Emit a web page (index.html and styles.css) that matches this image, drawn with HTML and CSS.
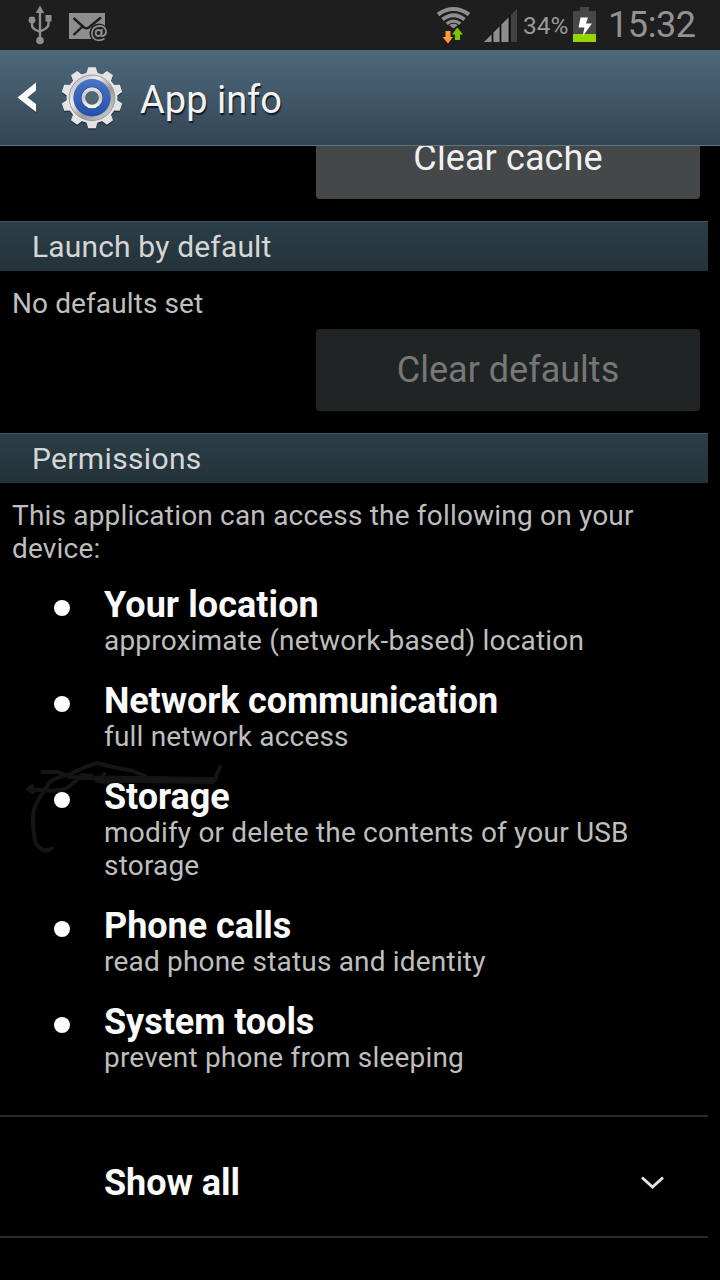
FILE: index.html
```html
<!DOCTYPE html>
<html lang="en">
<head>
<meta charset="utf-8">
<title>App info</title>
<link rel="stylesheet" href="styles.css">
</head>
<body>
<div class="screen">
  <div class="status">
    <svg class="status-left" width="130" height="50" viewBox="0 0 130 50">
      <g stroke="#8e8e8e" fill="none" stroke-width="2.4">
        <path d="M40 10V40M32 20V25Q32 28 35 29.5L40 32M48.500 19V24Q48.500 27 45 29L40 31.500"/>
      </g>
      <g fill="#8e8e8e"><path d="M40 5.500L44.300 13H35.700Z"/><circle cx="32" cy="20" r="3.400"/><path d="M45.500 15H51.500V21.500H45.500Z"/><circle cx="40" cy="40.500" r="3.800"/></g>
      <path d="M69 13H105V39H69Z" fill="#8e8e8e"/>
      <path d="M73.500 18L84 27.500Q87 29.500 90 26.500L101 17.500M73.500 35L83 26" stroke="#1e1e1e" stroke-width="2.400" fill="none"/>
      <circle cx="99" cy="33" r="9.600" fill="#1e1e1e"/>
      <circle cx="98.600" cy="33" r="3" fill="none" stroke="#8e8e8e" stroke-width="1.800"/>
      <path d="M102 29L101.300 34Q101.300 36.500 103.500 36Q106.500 34.500 106 31Q105 25.800 99.500 25.800Q92 26.500 91.800 33.500Q92.500 40.300 99 40.300Q102 40.300 104.500 38.800" fill="none" stroke="#8e8e8e" stroke-width="1.700"/>
    </svg>
    <svg class="wifi" width="34" height="44" viewBox="436 0 34 44">
      <g fill="none" stroke="#8e8e8e" stroke-width="4">
        <path d="M438 14.500Q453.500 3.500 469 14.500"/><path d="M442.500 19.500Q453.500 11 464.500 19.500"/><path d="M446.700 23.700Q453.500 18.500 460.300 23.700" stroke-width="3.200"/>
      </g>
      <path d="M449.300 25.200Q453.500 22.300 457.700 25.200L453.500 28.500Z" fill="#8e8e8e"/>
      <path d="M445.500 31H450.500V37H453L448 43.500L442.500 37H445.500Z" fill="#ff9c30"/>
      <path d="M455 40V34.500H452L457.300 27.500L463 34.500H460V40Z" fill="#7fc400"/>
    </svg>
    <svg class="signal" width="34" height="34" viewBox="484 9 34 34">
      <path d="M484 42L509.500 16.500V42Z" fill="#8e8e8e"/><path d="M511 15L517 9V42H511Z" fill="#424242"/>
      <path d="M492.500 33V42M500.500 25V42M509.500 15V42" stroke="#111" stroke-width="1.800"/>
    </svg>
    <span class="percent">34%</span>
    <svg class="battery" width="24" height="36" viewBox="573 7 24 36">
      <path d="M573 11H580V7H589V11H596V34H573Z" fill="#474747"/><path d="M573 34H596V42H573Z" fill="#97d500"/>
      <path d="M580.500 17.500H588L586 23.500H592L582.500 36.500L584.500 27.500H578.500Z" fill="#fff"/>
    </svg>
    <span class="clock">15:32</span>
  </div>

  <div class="appbar">
    <svg class="gear" width="130" height="94" viewBox="0 50 130 94">
      <defs>
        <linearGradient id="metal" x1="0" y1="0" x2="0" y2="1"><stop offset="0" stop-color="#dedede"/><stop offset=".5" stop-color="#c4c4c4"/><stop offset="1" stop-color="#f6f6f6"/></linearGradient>
        <linearGradient id="ring" x1="0" y1="0" x2="1" y2="1"><stop offset="0" stop-color="#aaa"/><stop offset=".35" stop-color="#eee"/><stop offset=".6" stop-color="#999"/><stop offset="1" stop-color="#ddd"/></linearGradient>
        <linearGradient id="blue" x1="0" y1="0" x2="0" y2="1"><stop offset="0" stop-color="#4b73c6"/><stop offset="1" stop-color="#2451a8"/></linearGradient>
        <path id="tooth" d="M-6-23L-3.800-30.500H3.800L6-23Z"/>
        <g id="cog"><use href="#tooth"/><use href="#tooth" transform="rotate(36)"/><use href="#tooth" transform="rotate(72)"/><use href="#tooth" transform="rotate(108)"/><use href="#tooth" transform="rotate(144)"/><use href="#tooth" transform="rotate(180)"/><use href="#tooth" transform="rotate(216)"/><use href="#tooth" transform="rotate(252)"/><use href="#tooth" transform="rotate(288)"/><use href="#tooth" transform="rotate(324)"/><circle r="25.500"/></g>
      </defs>
      <path d="M36 84L20 98.500L36 113V106.500L27 98.500L36 90.500Z" fill="#17232b"/>
      <path d="M36 82.500L17.500 97.500L36 112V104L27.500 97.500L36 90.500Z" fill="#fff"/>
      <use href="#cog" transform="translate(92 99.300)" fill="#26343e"/>
      <use href="#cog" transform="translate(92 97.800)" fill="#e4e4e4"/>
      <g transform="translate(92 97.800)">
        <circle r="22.800" fill="url(#ring)" stroke="#999" stroke-width="1"/>
        <circle r="18.700" fill="url(#blue)"/>
        <circle r="8.700" fill="#6e7c85" stroke="#254fa0" stroke-width="5"/>
        <circle r="8.700" fill="#516675" stroke="url(#metal)" stroke-width="3.600"/>
      </g>
    </svg>
    <h1 class="title">App info</h1>
  </div>

  <main class="content">
    <div class="button cache"><span>Clear cache</span></div>
    <h2 class="section">Launch by default</h2>
    <p class="body none">No defaults set</p>
    <div class="button disabled"><span>Clear defaults</span></div>
    <h2 class="section wide">Permissions</h2>
    <p class="body intro">This application can access the following on your<br>device:</p>
    <ul class="list">
      <li class="item"><h3 class="name loose">Your location</h3><p class="body">approximate (network-based) location</p></li>
      <li class="item"><h3 class="name tight">Network communication</h3><p class="body">full network access</p></li>
      <li class="item">
        <svg class="scribble" width="240" height="120" viewBox="0 0 240 120">
          <g fill="none" stroke="#151515" stroke-width="4" stroke-linecap="round" stroke-linejoin="round">
            <path d="M42 98Q35 104 27 95Q23 89 23 67Q23 58 30 47L40 32Q46 27 58 25L75 17L87 13L103 17L123 21L135 26"/>
            <path d="M22 36L18 39L23 42M18 39L29 40Q50 42 57 38L68 29"/>
            <path d="M32 22H48L60 27L78 28M92 27L94 24"/>
            <path d="M205 30L207 24L210 17"/>
            <path d="M71 25L82 26L88 31L100 32"/>
            <path d="M68 28H120L200 30" stroke-width="4"/>
            <path d="M88 29L202 30.500" stroke-width="7"/>
          </g>
        </svg>
        <h3 class="name">Storage</h3><p class="body">modify or delete the contents of your USB<br>storage</p></li>
      <li class="item"><h3 class="name">Phone calls</h3><p class="body">read phone status and identity</p></li>
      <li class="item"><h3 class="name">System tools</h3><p class="body">prevent phone from sleeping</p></li>
    </ul>
    <div class="show-all">
      <span class="name">Show all</span>
      <svg width="26" height="16" viewBox="0 0 26 16"><path d="M2 2.500L12.500 12L23 2.500" fill="none" stroke="#e4e4e4" stroke-width="2.800"/></svg>
    </div>
  </main>
</div>
</body>
</html>
```
FILE: styles.css
```css
* { box-sizing: border-box; }
body, h1, h2, h3, p, ul { margin: 0; padding: 0; font-weight: 400; }
body { background: #000; font-family: Roboto, sans-serif; }
svg { display: block; flex: none; }
.screen { width: 720px; height: 1280px; overflow: hidden; background: #000; display: flex; flex-direction: column; }
.status { height: 50px; flex: none; background: #1e1e1e; display: flex; align-items: flex-start; color: #9a9a9a; white-space: nowrap; }
.wifi { margin-left: 306px; }
.signal { margin: 9px 0 0 14px; }
.percent { width: 55px; padding-left: 5px; font-size: 24.500px; line-height: 30px; margin-top: 11px; }
.battery { margin-top: 7px; }
.clock { margin-left: 11px; font-size: 36px; line-height: 42px; margin-top: 4px; letter-spacing: -.4px; color: #929292; }
.appbar { height: 96px; flex: none; display: flex; background: linear-gradient(#4d697c, #334554); border-bottom: 1px solid #5b7585; }
.title { margin-left: 10px; font-size: 38px; line-height: 46px; margin-top: 27px; color: #f2f2f2; text-shadow: 1px 2px 1px #111a20; white-space: nowrap; }
.content { flex: 1; min-height: 0; overflow: hidden; }
.button { width: 384px; height: 82px; margin-left: 316px; border-radius: 4px; display: flex; align-items: center; justify-content: center; font-size: 36px; line-height: 44px; color: #f0f0f0; background: #454849; white-space: nowrap; }
.cache { height: 53px; border-radius: 0 0 4px 4px; align-items: flex-start; }
.cache span { margin-top: -10px; letter-spacing: .1px; }
.disabled { margin-top: 9px; background: #202424; color: #777; }
.section { width: 708px; height: 50px; margin-top: 22px; padding-left: 32px; border-top: 1px solid #42545f; background: linear-gradient(#2b3d47, #223339); font-size: 30px; line-height: 49px; letter-spacing: .16px; color: #d6d6d6; white-space: nowrap; }
.wide { letter-spacing: .35px; }
.body { font-size: 28px; line-height: 33px; letter-spacing: .19px; color: #bebebe; white-space: nowrap; }
.none { margin: 16px 0 0 12px; letter-spacing: .1px; }
.intro { margin: 16px 0 0 12px; }
.list { list-style: none; margin-top: 20px; display: flex; flex-direction: column; gap: 23px; }
.item { position: relative; padding-left: 104px; }
.item::before { content: ""; position: absolute; left: 54px; top: 15px; width: 16px; height: 16px; border-radius: 50%; background: #fff; }
.name { position: relative; display: block; font-size: 36px; line-height: 40px; font-weight: 700; letter-spacing: -.05px; color: #fafafa; white-space: nowrap; }
.loose { letter-spacing: .08px; }
.tight { letter-spacing: -.13px; }
.item .body { margin-top: -1px; margin-bottom: 1px; }
.scribble { position: absolute; left: 10px; top: -27px; z-index: -1; }
.item, .list { z-index: 0; }
.show-all { width: 708px; height: 123px; margin-top: 40px; padding: 12px 42px 0 104px; border-top: 2px solid #2a2a2a; border-bottom: 2px solid #2a2a2a; display: flex; justify-content: space-between; align-items: center; }
```
